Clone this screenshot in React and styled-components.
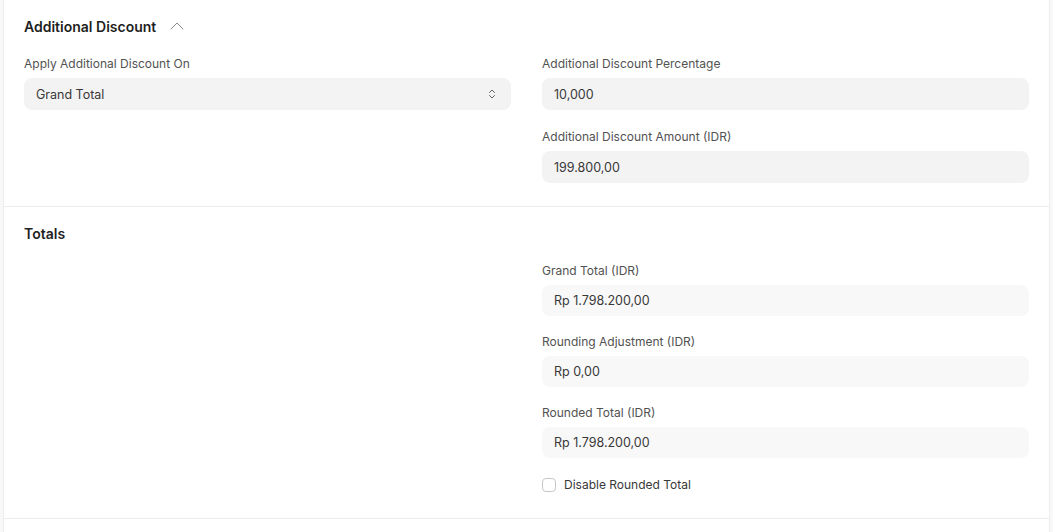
import React from 'react';
import styled, { createGlobalStyle } from 'styled-components';

const GlobalStyle = createGlobalStyle`
	body {
		margin: 0;
		background: #f8f8f8;
		font-family: Inter, "Noto Sans", sans-serif;
		-webkit-font-smoothing: antialiased;
	}
`

const Card = styled.div`
	margin: 0 3px;
	background: #fff;
	border-left: 1px solid #ededed;
	border-right: 1px solid #ededed;
	min-height: 532px;
`

const Section = styled.section`
	padding: ${p => p.$pad || '18px 20px 23px'};
	border-bottom: 1px solid #ededed;
`

const Heading = styled.div`
	display: flex;
	align-items: center;
	gap: 14px;
	height: 16px;
	margin-bottom: 22px;
	font-size: 14px;
	font-weight: 600;
	color: #1f1f1f;
`

const Columns = styled.div`
	display: grid;
	grid-template-columns: 1fr 1fr;
	column-gap: 31px;
`

const Column = styled.div`
	display: flex;
	flex-direction: column;
	gap: ${p => p.$gap || 19}px;
`

const Field = styled.div`
	display: flex;
	flex-direction: column;
`

const Label = styled.label`
	font-size: 12px;
	line-height: 16px;
	color: #525252;
	margin-bottom: 6px;
`

const Control = styled.div`
	display: flex;
	align-items: center;
	justify-content: space-between;
	height: ${p => (p.$readOnly ? 31 : 32)}px;
	padding: 0 ${p => (p.$select ? 15 : 12)}px 0 12px;
	border-radius: 8px;
	background: ${p => (p.$readOnly ? '#f8f8f8' : '#f3f3f3')};
	font-size: 12.5px;
	color: #383838;
`

const CheckRow = styled.div`
	display: flex;
	align-items: center;
	gap: 8px;
	margin-top: 1px;
	font-size: 12px;
	color: #383838;
`

const Box = styled.span`
	width: 12px;
	height: 12px;
	border: 1px solid #c7c7c7;
	border-radius: 4px;
	background: #fff;
`

const ChevronUp = () => (
	<svg width="14" height="8" viewBox="0 0 14 8" fill="none">
		<path d="M1 7l6-6 6 6" stroke="#8a8a8a" strokeWidth="1" strokeLinecap="round" strokeLinejoin="round" />
	</svg>
)

const UpDown = () => (
	<svg width="8" height="12" viewBox="0 0 8 12" fill="none">
		<path d="M1.5 4.5L4 2l2.5 2.5M1.5 7.5L4 10l2.5-2.5" stroke="#666" strokeWidth="1" strokeLinecap="round" strokeLinejoin="round" />
	</svg>
)

const totals = [
	{ label: 'Grand Total (IDR)', value: 'Rp 1.798.200,00' },
	{ label: 'Rounding Adjustment (IDR)', value: 'Rp 0,00' },
	{ label: 'Rounded Total (IDR)', value: 'Rp 1.798.200,00' },
]

export default function App() {
	return (
		<React.Fragment>
			<GlobalStyle />
			<Card>
				<Section>
					<Heading>
						Additional Discount <ChevronUp />
					</Heading>
					<Columns>
						<Column>
							<Field>
								<Label>Apply Additional Discount On</Label>
								<Control $select>
									Grand Total <UpDown />
								</Control>
							</Field>
						</Column>
						<Column>
							<Field>
								<Label>Additional Discount Percentage</Label>
								<Control>10,000</Control>
							</Field>
							<Field>
								<Label>Additional Discount Amount (IDR)</Label>
								<Control>199.800,00</Control>
							</Field>
						</Column>
					</Columns>
				</Section>
				<Section $pad="18px 20px 26px">
					<Heading>Totals</Heading>
					<Columns>
						<div />
						<Column $gap={18}>
							{totals.map(item => (
								<Field key={item.label}>
									<Label>{item.label}</Label>
									<Control $readOnly>{item.value}</Control>
								</Field>
							))}
							<CheckRow>
								<Box />
								Disable Rounded Total
							</CheckRow>
						</Column>
					</Columns>
				</Section>
			</Card>
		</React.Fragment>
	)
}
